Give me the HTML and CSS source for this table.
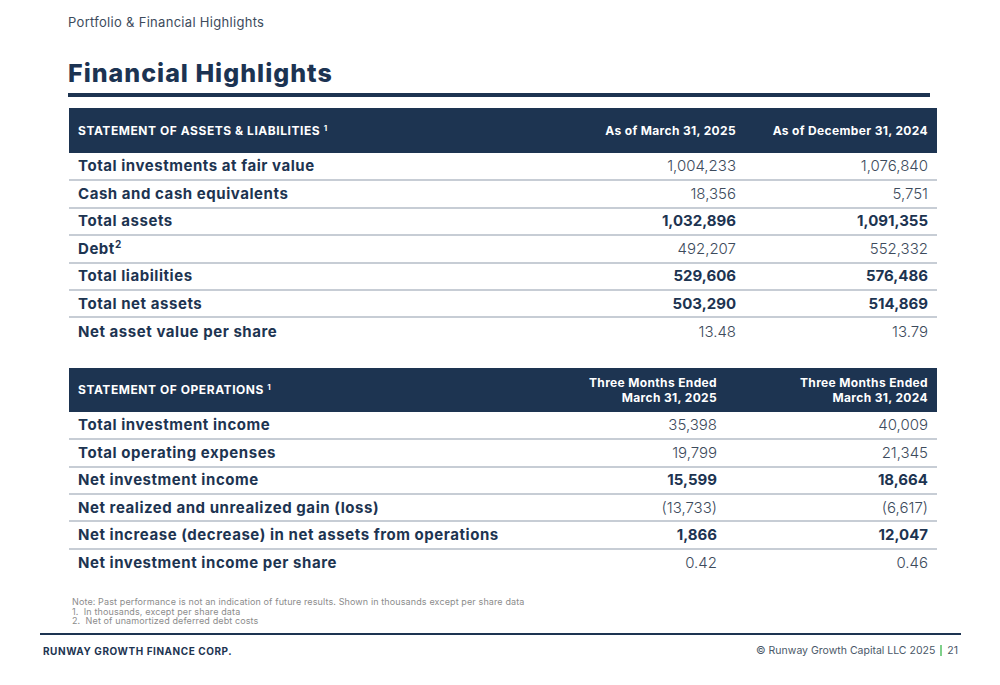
FILE: index.html
```html
<!DOCTYPE html>
<html lang="en">
<head>
<meta charset="utf-8">
<title>Financial Highlights</title>
<link rel="stylesheet" href="styles.css">
</head>
<body>
<div class="page">
  <div class="breadcrumb">Portfolio &amp; Financial Highlights</div>
  <h1 class="title">Financial Highlights</h1>
  <div class="title-rule"></div>

  <table class="fin fin-assets">
    <colgroup><col class="c-label"><col class="c-a"><col class="c-b"></colgroup>
    <thead>
      <tr class="head">
        <th class="lbl">STATEMENT OF ASSETS &amp; LIABILITIES <sup>1</sup></th>
        <th class="num">As of March 31, 2025</th>
        <th class="num">As of December 31, 2024</th>
      </tr>
    </thead>
    <tbody>
      <tr><td class="lbl">Total investments at fair value</td><td class="num">1,004,233</td><td class="num">1,076,840</td></tr>
      <tr><td class="lbl">Cash and cash equivalents</td><td class="num">18,356</td><td class="num">5,751</td></tr>
      <tr><td class="lbl">Total assets</td><td class="num strong">1,032,896</td><td class="num strong">1,091,355</td></tr>
      <tr><td class="lbl">Debt<sup>2</sup></td><td class="num">492,207</td><td class="num">552,332</td></tr>
      <tr><td class="lbl">Total liabilities</td><td class="num strong">529,606</td><td class="num strong">576,486</td></tr>
      <tr><td class="lbl">Total net assets</td><td class="num strong">503,290</td><td class="num strong">514,869</td></tr>
      <tr class="last"><td class="lbl">Net asset value per share</td><td class="num">13.48</td><td class="num">13.79</td></tr>
    </tbody>
  </table>

  <table class="fin fin-ops">
    <colgroup><col class="c-label"><col class="c-a"><col class="c-b"></colgroup>
    <thead>
      <tr class="head">
        <th class="lbl">STATEMENT OF OPERATIONS <sup>1</sup></th>
        <th class="num">Three Months Ended<br>March 31, 2025</th>
        <th class="num">Three Months Ended<br>March 31, 2024</th>
      </tr>
    </thead>
    <tbody>
      <tr><td class="lbl">Total investment income</td><td class="num">35,398</td><td class="num">40,009</td></tr>
      <tr><td class="lbl">Total operating expenses</td><td class="num">19,799</td><td class="num">21,345</td></tr>
      <tr><td class="lbl">Net investment income</td><td class="num strong">15,599</td><td class="num strong">18,664</td></tr>
      <tr><td class="lbl">Net realized and unrealized gain (loss)</td><td class="num">(13,733)</td><td class="num">(6,617)</td></tr>
      <tr><td class="lbl">Net increase (decrease) in net assets from operations</td><td class="num strong">1,866</td><td class="num strong">12,047</td></tr>
      <tr class="last"><td class="lbl">Net investment income per share</td><td class="num">0.42</td><td class="num">0.46</td></tr>
    </tbody>
  </table>

  <div class="notes">
    <p>Note: Past performance is not an indication of future results. Shown in thousands except per share data</p>
    <p>1.&nbsp; In thousands, except per share data</p>
    <p>2.&nbsp; Net of unamortized deferred debt costs</p>
  </div>
</div>

<footer class="footer">
  <div class="footer-rule"></div>
  <div class="footer-row">
    <span class="corp">RUNWAY GROWTH FINANCE CORP.</span>
    <span class="copy">© Runway Growth Capital LLC 2025 <span class="bar"></span> 21</span>
  </div>
</footer>
</body>
</html>
```

FILE: styles.css
```css
* { box-sizing: border-box; }
html, body { margin: 0; padding: 0; background: #ffffff; }
body {
  width: 1000px;
  height: 685px;
  font-family: "Inter", "Liberation Sans", sans-serif;
  color: #1d3451;
  overflow: hidden;
  position: relative;
}
.page {
  padding: 14px 63px 0 68px;
}
.breadcrumb {
  font-size: 13px;
  color: #3d4b5c;
  line-height: 16px;
  letter-spacing: 0.3px;
}
.title {
  margin: 28px 0 0 0;
  font-size: 25px;
  font-weight: 800;
  line-height: 30px;
  color: #1c3352;
  letter-spacing: 1px;
}
.title-rule {
  margin-top: 5px;
  height: 4px;
  width: 862px;
  background: #1d3451;
}

.fin {
  border-collapse: collapse;
  table-layout: fixed;
  width: 868px;
  margin-left: 1px;
}
.fin-assets { margin-top: 11px; }
.fin-ops { margin-top: 23px; }
.fin .c-label { width: auto; }
.fin-assets .c-a { width: 200px; }
.fin-assets .c-b { width: 192px; }
.fin-ops .c-a { width: 200px; }
.fin-ops .c-b { width: 211px; }

.head th {
  background: #1d3451;
  color: #ffffff;
  font-weight: 700;
  font-size: 12px;
  line-height: 15px;
  height: 45px;
  padding: 0 9px;
  vertical-align: middle;
  letter-spacing: 0.35px;
}
.fin-ops .head th { height: 44px; }
.head th.lbl { text-align: left; letter-spacing: 0.55px; }
.head th.num { text-align: right; }
.head sup { font-size: 8px; vertical-align: 4px; line-height: 0; }

.fin td {
  height: 27.4px;
  padding: 0 9px;
  font-size: 15px;
  line-height: 18px;
  border-bottom: 2px solid #c7cdd5;
  vertical-align: middle;
  white-space: nowrap;
}
.fin tr.last td { border-bottom: none; }
.fin td.lbl {
  font-weight: 700;
  color: #1d3451;
  text-align: left;
  letter-spacing: 0.55px;
}
.fin td.lbl sup { font-size: 10px; vertical-align: 6px; line-height: 0; }
.fin td.num {
  text-align: right;
  font-weight: 300;
  color: #3d4b5c;
}
.fin td.num.strong {
  font-weight: 700;
  color: #1d3451;
}

.notes {
  margin-top: 21px;
  padding-left: 4px;
  font-size: 9px;
  line-height: 9.6px;
  color: #8c8c8c;
  letter-spacing: 0.12px;
}
.notes p { margin: 0; }

.footer {
  position: absolute;
  left: 40px;
  top: 633px;
  width: 921px;
}
.footer-rule {
  height: 2px;
  background: #1d3451;
}
.footer-row {
  display: flex;
  justify-content: space-between;
  align-items: center;
  margin-top: 9px;
  padding: 0 3px;
}
.corp {
  font-size: 10px;
  font-weight: 700;
  color: #1d3451;
  letter-spacing: 0.55px;
}
.copy {
  font-size: 10.5px;
  color: #4a5868;
  display: flex;
  align-items: center;
  gap: 5px;
  letter-spacing: 0px;
}
.bar {
  display: inline-block;
  width: 2px;
  height: 11px;
  background: #7fd08a;
}
```
